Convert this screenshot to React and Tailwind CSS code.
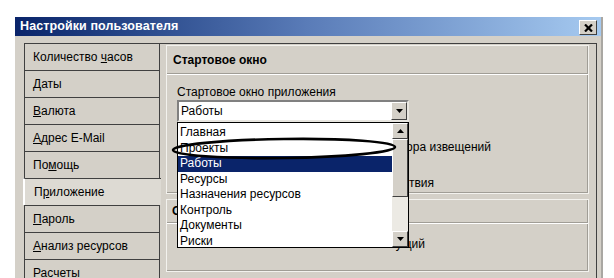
import React from 'react';

const tabs = [
  { pre: 'Количество ', key: 'ч', post: 'асов' },
  { pre: '', key: 'Д', post: 'аты' },
  { pre: '', key: 'В', post: 'алюта' },
  { pre: '', key: 'А', post: 'дрес E-Mail' },
  { pre: 'По', key: 'м', post: 'ощь' },
  { pre: 'П', key: 'р', post: 'иложение', active: true },
  { pre: '', key: 'П', post: 'ароль' },
  { pre: '', key: 'А', post: 'нализ ресурсов' },
  { pre: 'Р', key: 'а', post: 'счеты' },
];

const items = ['Главная', 'Проекты', 'Работы', 'Ресурсы', 'Назначения ресурсов', 'Контроль', 'Документы', 'Риски'];

const Arrow = ({ up }) => (
  <svg width="7" height="4" viewBox="0 0 7 4">
    <path d={up ? 'M0 4 L3.5 0 L7 4 Z' : 'M0 0 L7 0 L3.5 4 Z'} fill="#000" />
  </svg>
);

const Raised = ({ className, children }) => (
  <div className={`flex items-center justify-center bg-[#d4d0c8] border border-t-white border-l-white border-r-[#404040] border-b-[#404040] ${className}`}>
    {children}
  </div>
);

const Label = ({ t }) => (
  <span className="whitespace-pre">
    {t.pre}<span className="underline">{t.key}</span>{t.post}
  </span>
);

const App = () => {
  return (
    <div className="w-[614px] h-[278px] bg-white overflow-hidden pl-[15px] pt-[17px] font-['Liberation_Sans',sans-serif] text-[12px] text-black">
      <div className="relative w-[588px] h-[261px] bg-[#d4d0c8] border-r-2 border-[#a9a7a2] overflow-hidden">
        {/* Title bar */}
        <div className="h-[19px] flex items-center justify-between pl-[5px] pr-[4px] bg-gradient-to-r from-[#0a246a] via-[#5a7cb8] to-[#a6caf0]">
          <span className="text-white font-bold text-[12.5px] tracking-[0.1px]">Настройки пользователя</span>
          <Raised className="w-[18px] h-[15px] mt-[2px]">
            <svg width="9" height="8" viewBox="0 0 9 8">
              <path d="M1 0.5 L8 7.5 M8 0.5 L1 7.5" stroke="#000" strokeWidth="2.2" />
            </svg>
          </Raised>
        </div>

        {/* Body */}
        <div className="flex pl-[9px] pt-[7px] pr-[4px]">
          {/* Tabs */}
          <div className="w-[136px] flex flex-col shrink-0">
            {tabs.map((t, i) =>
              t.active ? (
                <div key={i} className="relative z-10 h-[27px] w-[138px] -ml-[1px] flex items-center pl-[9px] bg-[#dddad3] border-t border-t-[#404040] border-l-2 border-l-white">
                  <Label t={t} />
                </div>
              ) : (
                <div key={i} className="h-[27px] flex items-center pl-[8px] border-t border-l border-r border-[#404040] bg-[#d4d0c8]">
                  <Label t={t} />
                </div>
              )
            )}
          </div>

          {/* Panel */}
          <div className="flex-1 h-[240px] border-t border-r border-[#404040] pt-[1px] pl-[6px] pr-[7px]">
            {/* Group 1 */}
            <div className="h-[149px] border border-[#f3f2ee] shadow-[inset_-1px_-1px_0_#a09d96] flex flex-col">
              <div className="h-[28px] flex items-center pl-[6px] font-bold border-b border-b-[#a09d96] shadow-[0_1px_0_#fff]">
                Стартовое окно
              </div>
              <div className="relative pl-[10px] pt-[11px]">
                <div className="leading-[14px]">Стартовое окно приложения</div>
                <div className="relative mt-[1px] w-[232px]">
                  <div className="h-[22px] flex items-center bg-white border-2 border-t-[#808080] border-l-[#808080] border-r-[#e8e6e0] border-b-[#e8e6e0] pl-[2px]">
                    <span className="flex-1">Работы</span>
                    <Raised className="w-[16px] h-[18px]">
                      <Arrow />
                    </Raised>
                  </div>

                  {/* Dropdown list */}
                  <div className="absolute z-20 left-0 top-[22px] w-[232px] h-[126px] bg-white border border-black flex">
                    <div className="flex-1 pt-[2px]">
                      {items.map((it) => (
                        <div
                          key={it}
                          className={`h-[15.5px] leading-[15.5px] pl-[2px] ${it === 'Работы' ? 'bg-[#0a246a] text-white' : ''}`}
                        >
                          {it}
                        </div>
                      ))}
                    </div>
                    <div className="w-[16px] flex flex-col">
                      <Raised className="h-[16px]">
                        <Arrow up />
                      </Raised>
                      <div className="h-[58px] bg-[#d4d0c8] border border-t-white border-l-white border-r-[#404040] border-b-[#404040]" />
                      <div className="flex-1 bg-[#eceae4]" />
                      <Raised className="h-[16px]">
                        <Arrow />
                      </Raised>
                    </div>
                  </div>
                </div>

                {/* rows hidden behind the open list; only their ends show */}
                <div className="w-[314px] text-right whitespace-nowrap mt-[18px] leading-[14px]">
                  Открывать при запуске окно монитора извещений
                </div>
                <div className="w-[257px] text-right whitespace-nowrap mt-[22px] leading-[14px]">
                  Запрашивать подтверждение действия
                </div>
              </div>
            </div>

            {/* Group 2 */}
            <div className="mt-[5px] h-[73px] border border-[#f3f2ee] shadow-[inset_-1px_-1px_0_#a09d96] flex flex-col">
              <div className="h-[23px] flex items-center pl-[5px] font-bold border-b border-b-[#a09d96] shadow-[0_1px_0_#fff]">
                Отображение
              </div>
              <div className="w-[258px] text-right whitespace-nowrap mt-[14px] leading-[14px]">
                Показывать список назначений текущий
              </div>
            </div>
          </div>
        </div>

        {/* Annotation ellipse */}
        <svg className="absolute left-0 top-0 z-30 pointer-events-none" width="588" height="261">
          <ellipse cx="269" cy="131.5" rx="111" ry="9.5" fill="none" stroke="#000" strokeWidth="2.6" transform="rotate(-0.8 269 131.5)" />
        </svg>
      </div>
    </div>
  );
};

export default App;
